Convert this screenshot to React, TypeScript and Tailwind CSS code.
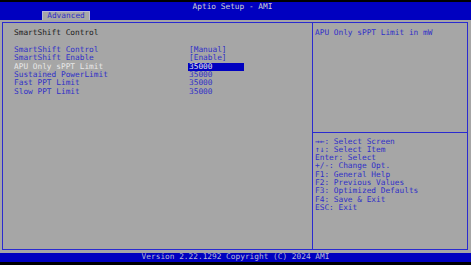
import React from "react";

const rows: [string, string][] = [
  ["SmartShift Control", "[Manual]"],
  ["SmartShift Enable", "[Enable]"],
  ["APU Only sPPT Limit", "35000"],
  ["Sustained PowerLimit", "35000"],
  ["Fast PPT Limit", "35000"],
  ["Slow PPT Limit", "35000"],
];

const help = [
  "\u2192\u2190: Select Screen",
  "\u2191\u2193: Select Item",
  "Enter: Select",
  "+/-: Change Opt.",
  "F1: General Help",
  "F2: Previous Values",
  "F3: Optimized Defaults",
  "F4: Save & Exit",
  "ESC: Exit",
];

export default function App() {
  return (
    <div
      className="w-[471px] h-[265px] bg-black flex flex-col overflow-hidden text-[7.8px] leading-[8.33px] whitespace-pre"
      style={{ fontFamily: '"DejaVu Sans Mono", "Liberation Mono", monospace' }}
    >
      <div className="h-[2px] bg-black" />
      <div className="h-[18px] bg-[#0000c0] relative flex flex-col">
        <div className="h-[9px] flex items-center justify-center text-[#d0d0d0]">
          <span className="mr-[6px] mt-[1px]">Aptio Setup - AMI</span>
        </div>
        <div className="h-[9px] flex items-end pl-[42px]">
          <div className="w-[48px] h-[9px] bg-[#a6a6a6] text-[#3030c8] flex items-center justify-center border-t border-x border-[#b8b8d8]">
            Advanced
          </div>
        </div>
      </div>
      <div className="h-[233px] bg-[#a6a6a6] pt-[2px] pl-[2px] pr-[3px] pb-[3px]">
        <div className="h-[228px] border border-[#2a2ad0] flex">
          <div className="w-[310px] border-r border-[#2a2ad0] pl-[11px] pt-[6px]">
            <div className="text-[#202020]">SmartShift Control</div>
            <div className="h-[8.6px]" />
            {rows.map(([l, v], i) => {
              const sel = i === 2;
              return (
                <div key={l} className="flex">
                  <div className={`w-[174px] ${sel ? "text-[#e8e8e8]" : "text-[#3030c8]"}`}>{l}</div>
                  <div
                    className={`w-[56px] ${
                      sel ? "bg-[#0000c0] text-[#e8e8e8]" : "text-[#3030c8]"
                    } pl-[1px]`}
                  >
                    {v}
                  </div>
                </div>
              );
            })}
          </div>
          <div className="flex-1 flex flex-col">
            <div className="h-[110px] border-b border-[#2a2ad0] pl-[2px] pt-[6px] text-[#3030c8]">
              APU Only sPPT Limit in mW
            </div>
            <div className="pl-[2px] pt-[4.5px] text-[#3030c8]">
              {help.map((h) => (
                <div key={h}>{h}</div>
              ))}
            </div>
          </div>
        </div>
      </div>
      <div className="h-[9px] bg-[#0000c0] flex items-center justify-center text-[#b8b8d8]">
        Version 2.22.1292 Copyright (C) 2024 AMI
      </div>
      <div className="flex-1 bg-black" />
    </div>
  );
}
